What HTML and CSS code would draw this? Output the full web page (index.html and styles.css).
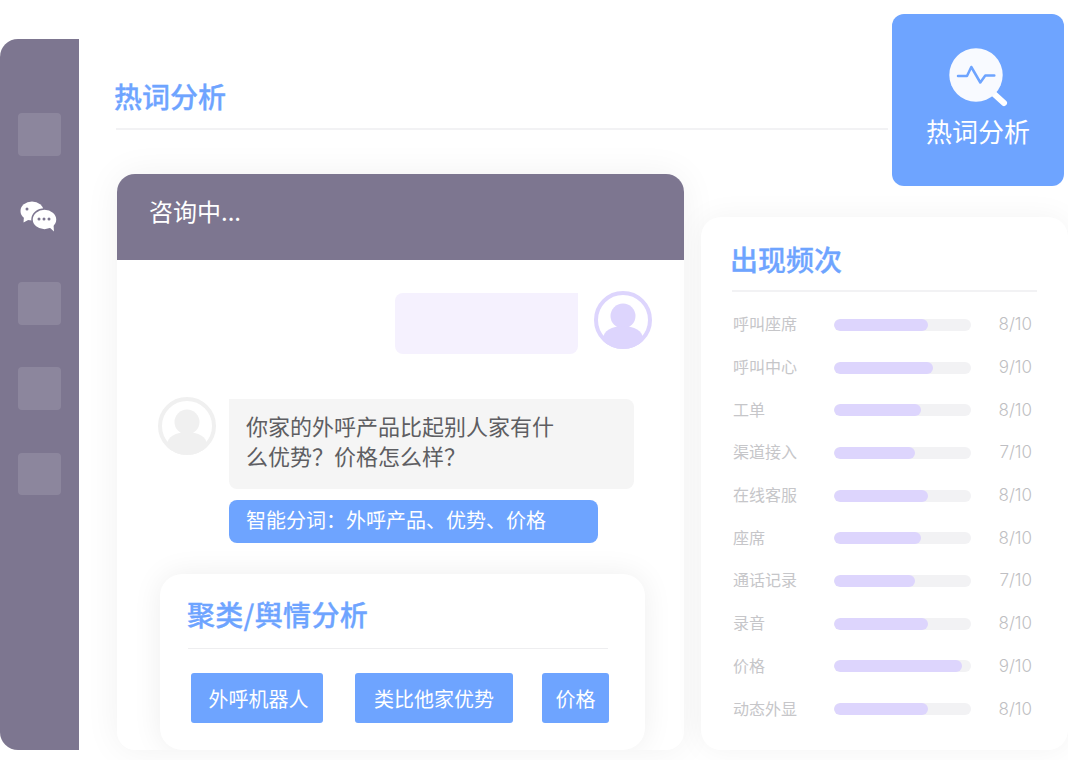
FILE: index.html
```html
<!DOCTYPE html>
<html lang="zh-CN">
<head>
    <meta charset="utf-8">
    <meta name="viewport" content="width=device-width, initial-scale=1.0">
    <title>热词分析</title>
    <link rel="stylesheet" href="styles.css">
</head>
<body>
<div class="app">
    <aside class="sidebar">
        <div class="nav-item"></div>
        <div class="nav-item nav-icon">
            <svg width="38" height="31" viewBox="0 0 38 31">
                <ellipse cx="12" cy="10" rx="11.500" ry="9.500" fill="#fff"/>
                <path d="M4 15l-.5 6.500 6.500-3.500z" fill="#fff"/>
                <circle cx="7" cy="8" r="1.500" fill="#7d7690"/>
                <ellipse cx="24.500" cy="18.500" rx="12.500" ry="10.500" fill="#fff" stroke="#7d7690" stroke-width="1.500"/>
                <path d="M29 26l5 4.500-.5-7z" fill="#fff"/>
                <circle cx="19" cy="18" r="1.500" fill="#7d7690"/>
                <circle cx="24" cy="18" r="1.500" fill="#7d7690"/>
                <circle cx="29" cy="18" r="1.500" fill="#7d7690"/>
            </svg>
        </div>
        <div class="nav-item"></div>
        <div class="nav-item"></div>
        <div class="nav-item nav-last"></div>
    </aside>

    <main class="content">
        <h1 class="page-title">热词分析</h1>
        <div class="panels">
            <section class="chat">
                <div class="chat-header">咨询中...</div>
                <div class="chat-body">
                    <div class="msg-out">
                        <div class="bubble-out"></div>
                        <svg class="avatar" width="58" height="58" viewBox="0 0 58 58">
                            <defs><clipPath id="clip-a"><circle cx="29" cy="29" r="29"/></clipPath></defs>
                            <circle cx="29" cy="29" r="27" fill="#fff" stroke="#ddd5fd" stroke-width="4"/>
                            <circle cx="29" cy="25" r="12.500" fill="#ddd5fd"/>
                            <path clip-path="url(#clip-a)" fill="#ddd5fd" d="M9 58V48c0-8 9-13 20-13s20 5 20 13v10z"/>
                        </svg>
                    </div>
                    <div class="msg-in">
                        <svg class="avatar" width="58" height="58" viewBox="0 0 58 58">
                            <defs><clipPath id="clip-b"><circle cx="29" cy="29" r="29"/></clipPath></defs>
                            <circle cx="29" cy="29" r="27" fill="#fff" stroke="#f0f0f0" stroke-width="4"/>
                            <circle cx="29" cy="25" r="12.500" fill="#f0f0f0"/>
                            <path clip-path="url(#clip-b)" fill="#f0f0f0" d="M9 58V48c0-8 9-13 20-13s20 5 20 13v10z"/>
                        </svg>
                        <div class="msg-in-text">
                            <div class="bubble-in">你家的外呼产品比起别人家有什<br>么优势&#xFF1F;价格怎么样&#xFF1F;</div>
                            <div class="segment">智能分词&#xFF1A;外呼产品、优势、价格</div>
                        </div>
                    </div>
                    <div class="cluster">
                        <h2 class="cluster-title">聚类/舆情分析</h2>
                        <div class="tags">
                            <span class="tag">外呼机器人</span>
                            <span class="tag tag-wide">类比他家优势</span>
                            <span class="tag tag-small">价格</span>
                        </div>
                    </div>
                </div>
            </section>

            <section class="freq">
                <h2 class="freq-title">出现频次</h2>
                <ul class="freq-list">
                    <li class="freq-row"><span class="freq-name">呼叫座席</span><span class="bar"><span class="bar-fill" style="width: 94px"></span></span><span class="freq-num">8/10</span></li>
                    <li class="freq-row"><span class="freq-name">呼叫中心</span><span class="bar"><span class="bar-fill" style="width: 99px"></span></span><span class="freq-num">9/10</span></li>
                    <li class="freq-row"><span class="freq-name">工单</span><span class="bar"><span class="bar-fill" style="width: 87px"></span></span><span class="freq-num">8/10</span></li>
                    <li class="freq-row"><span class="freq-name">渠道接入</span><span class="bar"><span class="bar-fill" style="width: 81px"></span></span><span class="freq-num">7/10</span></li>
                    <li class="freq-row"><span class="freq-name">在线客服</span><span class="bar"><span class="bar-fill" style="width: 94px"></span></span><span class="freq-num">8/10</span></li>
                    <li class="freq-row"><span class="freq-name">座席</span><span class="bar"><span class="bar-fill" style="width: 87px"></span></span><span class="freq-num">8/10</span></li>
                    <li class="freq-row"><span class="freq-name">通话记录</span><span class="bar"><span class="bar-fill" style="width: 81px"></span></span><span class="freq-num">7/10</span></li>
                    <li class="freq-row"><span class="freq-name">录音</span><span class="bar"><span class="bar-fill" style="width: 94px"></span></span><span class="freq-num">8/10</span></li>
                    <li class="freq-row"><span class="freq-name">价格</span><span class="bar"><span class="bar-fill" style="width: 128px"></span></span><span class="freq-num">9/10</span></li>
                    <li class="freq-row"><span class="freq-name">动态外显</span><span class="bar"><span class="bar-fill" style="width: 94px"></span></span><span class="freq-num">8/10</span></li>
                </ul>
            </section>
        </div>
    </main>
</div>

<div class="badge">
    <svg width="60" height="60" viewBox="0 0 60 60">
        <path d="M44 45l11 10" stroke="#fff" stroke-width="6" stroke-linecap="round"/>
        <circle cx="27" cy="27" r="26.700" fill="#f8faff"/>
        <path d="M9 28h9l4.300-9 9 15.500 5-7h9" fill="none" stroke="#6ea4ff" stroke-width="2.500" stroke-linecap="round" stroke-linejoin="round"/>
    </svg>
    <span class="badge-text">热词分析</span>
</div>
</body>
</html>
```

FILE: styles.css
```css
/* Page */
body {
    margin: 0;
    height: 760px;
    overflow: hidden;
    background: #fff;
    font-family: "Noto Sans CJK SC", "Noto Sans", sans-serif;
}
h1, h2, ul {
    margin: 0;
    padding: 0;
}
.app {
    display: flex;
    height: 760px;
    padding: 39px 0 10px;
    box-sizing: border-box;
}
/* Left rail */
.sidebar {
    flex: 0 0 79px;
    box-sizing: border-box;
    padding-top: 74px;
    display: flex;
    flex-direction: column;
    align-items: center;
    gap: 42px;
    background: #7d7690;
    border-radius: 18px 0 0 18px;
}
.nav-item {
    width: 43px;
    height: 42.700px;
    background: rgba(255, 255, 255, 0.12);
    border-radius: 4px;
}
.nav-last {
    margin-top: 1px;
}
.nav-icon {
    display: flex;
    align-items: center;
    justify-content: center;
    background: none;
}
.nav-icon svg {
    margin: -6px 0 0 -1px;
}
/* Main area */
.content {
    flex: 1;
    min-width: 0;
    display: flex;
    flex-direction: column;
    padding-left: 37px;
}
.page-title {
    width: 772px;
    height: 91px;
    box-sizing: border-box;
    padding-top: 37px;
    border-bottom: 2px solid #f2f2f4;
    font-size: 28px;
    line-height: 40px;
    font-weight: 500;
    -webkit-text-stroke: 0.3px #6ea4ff;
    text-indent: -2px;
    color: #6ea4ff;
}
.panels {
    flex: 1;
    display: flex;
    margin-top: 44px;
    padding-left: 1px;
    min-height: 0;
}
/* Chat card */
.chat {
    flex: 0 0 567px;
    display: flex;
    flex-direction: column;
    background: #fff;
    border-radius: 18px;
    box-shadow: 0 0 36px rgba(0, 0, 0, 0.06);
    overflow: hidden;
}
.chat-header {
    height: 86px;
    box-sizing: border-box;
    padding: 19px 32px 0;
    background: #7d7690;
    font-size: 24px;
    line-height: 36px;
    color: #fff;
}
.chat-body {
    flex: 1;
    display: flex;
    flex-direction: column;
    min-height: 0;
}
.msg-out {
    display: flex;
    justify-content: flex-end;
    align-items: flex-start;
    gap: 16px;
    padding: 31px 32px 0 0;
}
.bubble-out {
    width: 183px;
    height: 61px;
    margin-top: 2px;
    background: #f5f1fe;
    border-radius: 8px 0 8px 8px;
}
.msg-in {
    display: flex;
    align-items: flex-start;
    gap: 13px;
    padding: 43px 0 0 41px;
}
.avatar {
    flex: none;
}
.msg-in-text {
    margin-top: 2px;
}
.bubble-in {
    width: 405px;
    height: 90px;
    box-sizing: border-box;
    padding: 11px 17px;
    background: #f5f5f5;
    border-radius: 0 8px 8px 8px;
    font-size: 22px;
    line-height: 30px;
    color: #5e5e62;
}
.segment {
    width: 369px;
    height: 43px;
    box-sizing: border-box;
    margin-top: 11px;
    padding: 0 17px;
    background: #6ea4ff;
    border-radius: 8px;
    font-size: 20px;
    line-height: 40px;
    color: #fff;
}
/* Cluster card */
.cluster {
    flex: 1;
    width: 485px;
    box-sizing: border-box;
    margin: 31px 0 0 43px;
    padding: 19px 36px 0 28px;
    background: #fff;
    border-radius: 22px;
    box-shadow: 0 0 30px rgba(0, 0, 0, 0.07);
}
.cluster-title {
    height: 55px;
    margin-right: 1px;
    padding-left: 2px;
    font-size: 28px;
    line-height: 42px;
    font-weight: 500;
    letter-spacing: 0.3px;
    -webkit-text-stroke: 0.3px #6ea4ff;
    text-indent: -3px;
    color: #6ea4ff;
    border-bottom: 1px solid #eeeef0;
}
.tags {
    display: flex;
    margin: 24px 0 0 3px;
}
.tag {
    width: 132px;
    height: 50px;
    background: #6ea4ff;
    border-radius: 3px;
    font-size: 20px;
    line-height: 52px;
    text-align: center;
    color: #fff;
}
.tag:first-child {
    text-indent: 3px;
}
.tag-wide {
    width: 158px;
    margin-left: 32px;
}
.tag-small {
    width: 67px;
    margin-left: 29px;
}
/* Frequency card */
.freq {
    flex: 0 0 367px;
    box-sizing: border-box;
    margin: 43px 0 0 17px;
    padding: 22px 31px 0 31px;
    background: #fff;
    border-radius: 20px;
    box-shadow: 0 0 30px rgba(0, 0, 0, 0.05);
}
.freq-title {
    height: 51px;
    font-size: 28px;
    line-height: 40px;
    font-weight: 500;
    -webkit-text-stroke: 0.3px #6ea4ff;
    text-indent: -2px;
    color: #6ea4ff;
    border-bottom: 2px solid #f2f2f4;
}
.freq-list {
    list-style: none;
    padding-top: 10px;
}
.freq-row {
    display: flex;
    align-items: center;
    height: 42.700px;
    font-size: 16px;
    color: #c6c6c9;
}
.freq-name {
    flex: 0 0 102px;
    padding-left: 1px;
    box-sizing: border-box;
}
.bar {
    flex: 0 0 137px;
    height: 12px;
    margin-top: 3px;
    background: #f2f2f4;
    border-radius: 6px;
    overflow: hidden;
}
.bar-fill {
    display: block;
    height: 100%;
    background: #ddd5fd;
    border-radius: 6px;
}
.freq-num {
    flex: 1;
    padding-top: 2px;
    text-align: right;
    margin-right: 5px;
    font-family: Inter, "Noto Sans", sans-serif;
    font-size: 17px;
    font-weight: 300;
    color: #bfbfc3;
}
/* Floating badge, top right */
.badge {
    position: absolute;
    top: 14px;
    left: 892px;
    width: 172px;
    height: 172px;
    box-sizing: border-box;
    padding-top: 34px;
    display: flex;
    flex-direction: column;
    align-items: center;
    background: #6ea4ff;
    border-radius: 12px;
    color: #fff;
}
.badge svg {
    margin-left: 2px;
}
.badge-text {
    margin-top: 4px;
    font-size: 26px;
    line-height: 38px;
}
```
